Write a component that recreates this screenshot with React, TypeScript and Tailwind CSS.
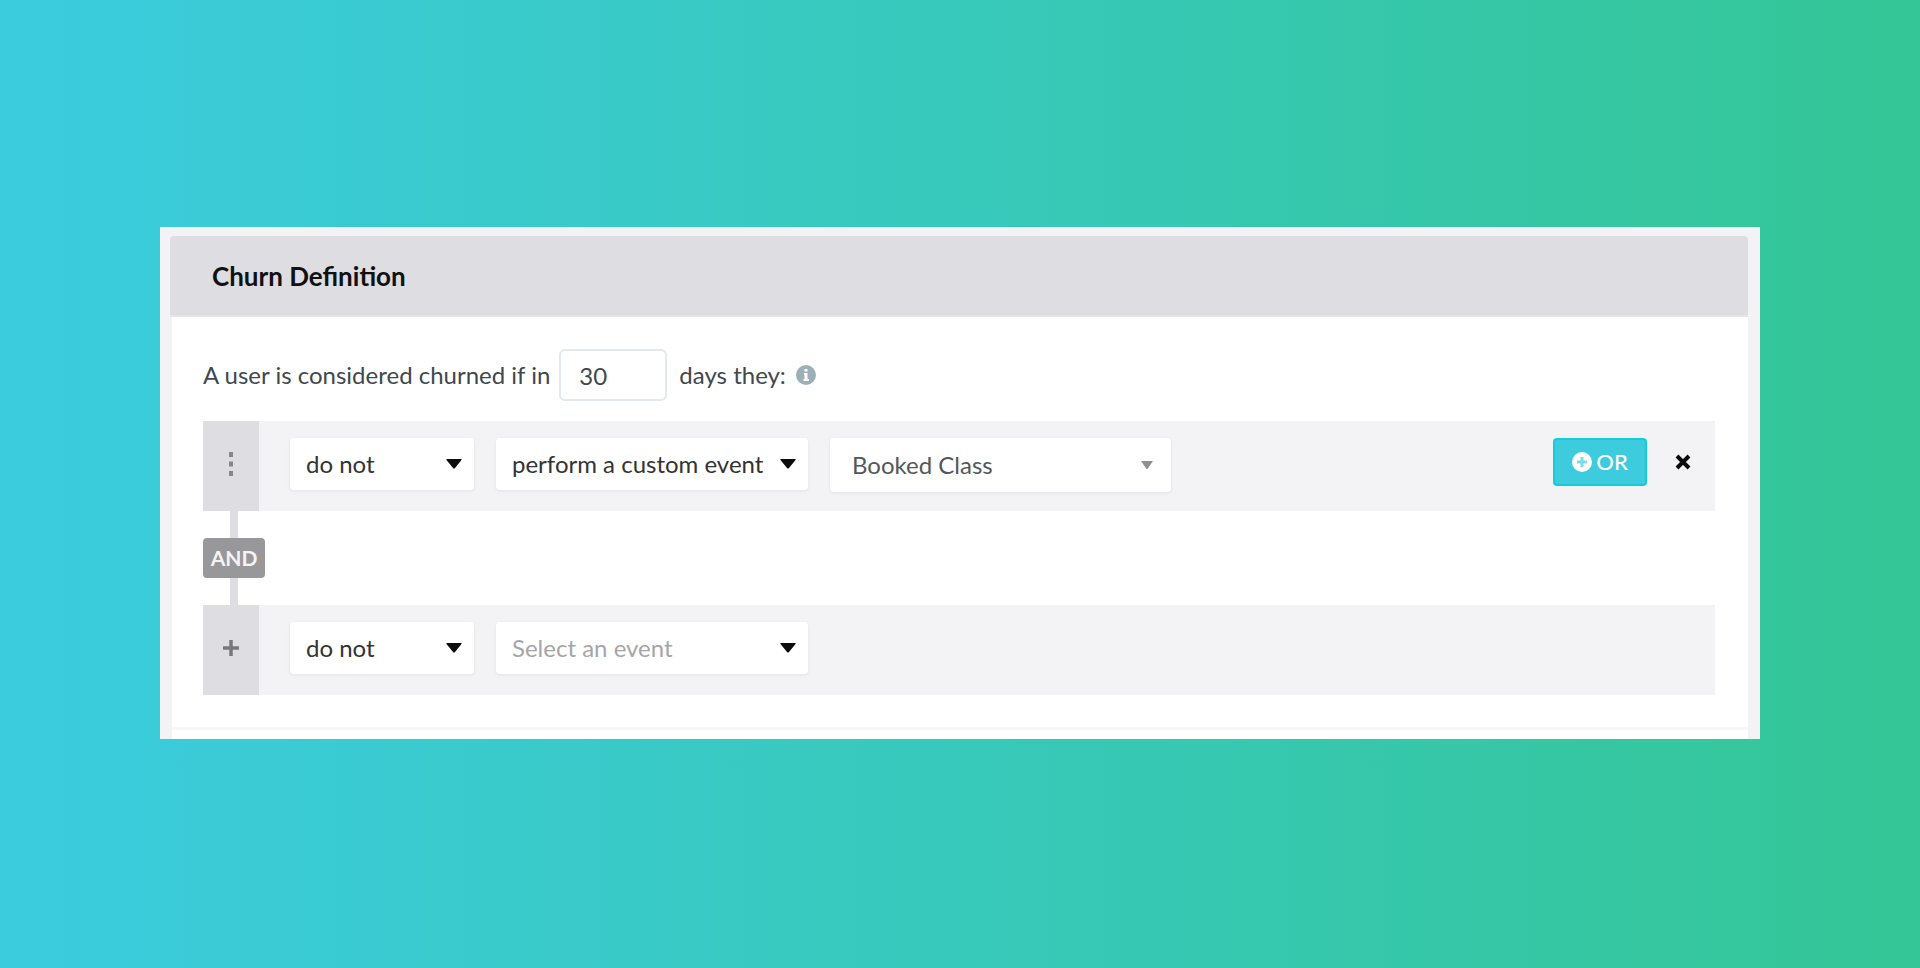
import { useState } from "react";

function Caret({ small = false }: { small?: boolean }) {
  return small ? (
    <svg className="pointer-events-none h-2 w-3" viewBox="0 0 12 8" fill="#8f9094" aria-hidden="true">
      <path d="M0 0h12L6.500 8h-1z" />
    </svg>
  ) : (
    <svg className="pointer-events-none h-2.5 w-4" viewBox="0 0 16 10" fill="#0c0c0c" aria-hidden="true">
      <path d="M1 0h14q1 0 .5 1L9 9Q8 10 7 9L.5 1Q0 0 1 0z" />
    </svg>
  );
}

type SelectProps = {
  label: string;
  options: string[];
  box: string;
  text?: string;
  smallCaret?: boolean;
};

function Select({ label, options, box, text = "pl-4 text-[#333]", smallCaret }: SelectProps) {
  return (
    <div className={`grid items-center ${box}`}>
      <select
        aria-label={label}
        className={`col-start-1 row-start-1 h-full w-full appearance-none rounded-sm bg-white pr-8 shadow-[0_1px_2px_1px_#e9e9ed] outline-none ${text}`}
      >
        {options.map((o) => (
          <option key={o}>{o}</option>
        ))}
      </select>
      <span className={`pointer-events-none col-start-1 row-start-1 justify-self-end ${smallCaret ? "pr-[18px]" : "pr-3"}`}>
        <Caret small={smallCaret} />
      </span>
    </div>
  );
}

export default function App() {
  const [days, setDays] = useState("30");
  return (
    <main className="flex min-h-screen items-center justify-center bg-[linear-gradient(90deg,#3bccdf,#34c696)] px-40 font-['Lato',sans-serif] text-[24px] leading-7">
      <section className="-mt-0.5 w-full bg-[#f3f3f6] pt-[9px] pr-3 pl-2.5">
        <h1 className="rounded-t-sm border-b-2 border-[#e6e6ea] bg-[#dddde2] pt-6 pr-10 pb-[23px] pl-[42px] text-[26px] leading-8 font-bold text-[#111]">
          Churn Definition
        </h1>
        <div className="ml-0.5 bg-white pt-8 pr-[33px] pl-[31px]">
          <div className="flex items-center text-[#41484d]">
            <label htmlFor="days">A user is considered churned if in</label>
            <input
              id="days"
              value={days}
              onChange={(e) => setDays(e.target.value)}
              className="ml-[9px] h-13 w-27 rounded-md border-2 border-[#e3e8ea] bg-white pl-[18px] outline-none"
            />
            <span className="ml-3">days they:</span>
            <svg className="ml-2.5 size-5" viewBox="0 0 20 20" role="img" aria-label="Info">
              <circle cx="10" cy="10" r="10" fill="#9dafb8" />
              <path d="M8 8h3.500v6H13v2H7.500v-2H8.500v-4H8zM8.500 4h3v2.500h-3z" fill="#fff" />
            </svg>
          </div>

          <div className="mt-5 flex h-[90px] bg-[#f3f3f6]">
            <button aria-label="Move condition" className="flex w-14 items-center justify-center bg-[#dddde2] pb-1">
              <svg className="h-6 w-1.5" viewBox="0 0 6 24" fill="#85858a" aria-hidden="true">
                <path d="M1 0h4v5H1zM1 9.500h4v5H1zM1 19h4v5H1z" />
              </svg>
            </button>
            <div className="flex flex-1 items-start pt-[17px] pr-5 pl-[31px]">
              <Select label="Condition" options={["do not", "do"]} box="h-13 w-46" />
              <Select label="Event type" options={["perform a custom event"]} box="ml-[22px] h-13 w-78" />
              <Select
                label="Event"
                options={["Booked Class"]}
                box="ml-[22px] h-[54px] w-[341px]"
                text="pl-[22px] text-[#55565a]"
                smallCaret
              />
              <button className="ml-auto flex h-12 w-[94px] items-center justify-center gap-1 rounded-sm border-2 border-[#14cbde] bg-[#3cccde] text-[22px] font-medium text-white">
                <svg className="size-5" viewBox="0 0 20 20" aria-hidden="true">
                  <circle cx="10" cy="10" r="10" fill="#fff" />
                  <path d="M8.500 5h3v3.500H15v3h-3.500V15h-3v-3.500H5v-3h3.500z" fill="#7cdce9" />
                </svg>
                OR
              </button>
              <button aria-label="Remove condition" className="ml-6 flex h-12 w-6 items-center justify-center">
                <svg className="size-4" viewBox="0 0 16 16" stroke="#0a0a0a" strokeWidth="4" aria-hidden="true">
                  <path d="M2 2l12 12M14 2L2 14" />
                </svg>
              </button>
            </div>
          </div>

          <div className="flex w-[62px] flex-col items-center">
            <div className="h-[27px] w-2 bg-[#dddde2]" />
            <div className="flex h-10 w-full items-center justify-center rounded-sm bg-[#98989a] text-[21px] font-bold text-[#f4f4f4]">
              AND
            </div>
            <div className="h-[27px] w-2 bg-[#dddde2]" />
          </div>

          <div className="flex h-[90px] bg-[#f3f3f6]">
            <button aria-label="Add condition" className="flex w-14 items-center justify-center bg-[#dddde2] pb-1">
              <svg className="size-4" viewBox="0 0 16 16" stroke="#77777c" strokeWidth="3.500" aria-hidden="true">
                <path d="M8 0v16M0 8h16" />
              </svg>
            </button>
            <div className="flex flex-1 items-start pt-[17px] pr-5 pl-[31px]">
              <Select label="Second condition" options={["do not", "do"]} box="h-13 w-46" />
              <Select
                label="Second event type"
                options={["Select an event"]}
                box="ml-[22px] h-13 w-78"
                text="pl-4 text-[#a5a5a8]"
              />
            </div>
          </div>
          <div className="h-8" />
        </div>
        <div className="ml-0.5 h-3 border-t-3 border-[#f7f7f9] bg-white" />
      </section>
    </main>
  );
}
